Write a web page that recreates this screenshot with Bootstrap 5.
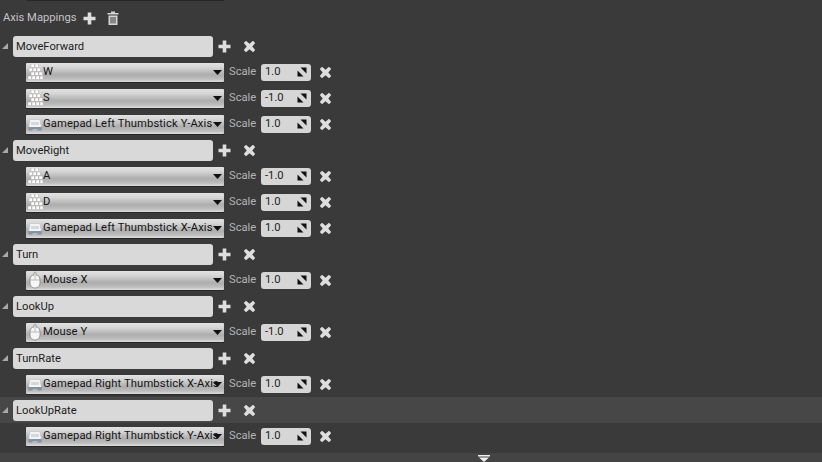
<!DOCTYPE html>
<html lang="en">
<head>
    <meta charset="UTF-8">
    <meta name="viewport" content="width=device-width, initial-scale=1.0">
    <title>Axis Mappings</title>
    <link href="https://cdn.jsdelivr.net/npm/bootstrap@5.3.0/dist/css/bootstrap.min.css" rel="stylesheet">
    <style>
        html, body { height: 100%; }
        body { background: #3a3a3a; font-family: Roboto, "Liberation Sans", sans-serif; font-size: 11.2px; color: #1c1c1c; overflow: hidden; }
        .top-sliver { height: 1px; width: 197px; margin-left: 27px; background: #262626; }
        .page-wrap { height: 462px; }
        .head-row { height: 26px; margin-top: 4px; margin-bottom: 2px; padding-left: 3px; color: #c4c4c4; }
        .map-row { height: 26px; }
        .map-row.hovered { background: #474747; }
        .fold-arrow { width: 13px; height: 26px; flex: none; }
        .name-box { width: 200px; height: 21px; background: #d9d9d9; border-radius: 3px; padding-left: 3px; line-height: 21px; }
        .sub-row { padding-left: 26px; }
        .combo { position: relative; width: 198px; height: 19px; flex: none; padding-left: 1px; border-radius: 1px; background: linear-gradient(#e2e2e2 0, #d4d4d4 25%, #adadad 62%, #bebebe 85%, #dedede 100%); box-shadow: 0 1px 0 #262626; }
        .combo-text { white-space: nowrap; color: #141414; letter-spacing: .13px; padding-top: 1px; }
        .combo svg.dev { flex: none; }
        .combo svg.drop { position: absolute; right: 2px; top: 7px; }
        .scale-lbl { width: 28px; margin-left: 5px; color: #b4b4b4; flex: none; padding-top: 1px; }
        .scale-box { width: 50px; height: 17px; margin-left: 4px; flex: none; background: #d6d6d6; border-radius: 3px; padding: 0 4px; color: #222; }
        .scale-box span { padding-top: 1px; }
        .act { flex: none; display: block; }
        .head-add { margin-left: 6px; }
        .head-trash { margin-left: 11px; }
        .act-add { margin-left: 5px; }
        .act-del { margin-left: 12px; }
        .act-rm { margin-left: 8px; }
        .bottom-bar { position: absolute; left: 0; right: 0; top: 453px; height: 9px; background: #444444; }
        .bottom-bar svg { position: absolute; left: 478px; top: 2px; }
    </style>
</head>
<body>
    <svg width="0" height="0" class="position-absolute">
        <defs>
            <symbol id="plus" viewBox="0 0 13 13"><path d="M4.700 .5h3.600v4.200h4.200v3.600H8.300v4.200H4.700V8.300H.5V4.700h4.200z" fill="#dedede"/></symbol>
            <symbol id="cross" viewBox="0 0 13 13"><path d="M3 .8 6.500 3.700 10 .8 12.200 3 9.300 6.500 12.200 10 10 12.200 6.500 9.300 3 12.200 .8 10 3.700 6.500 .8 3z" fill="#dedede"/></symbol>
            <symbol id="open" viewBox="0 0 8 8"><path d="M7 1v6H1z" fill="#a8a8a8"/></symbol>
            <symbol id="spin" viewBox="0 0 10 10"><path d="M3.500 .5H9.500V6.500zM.5 3.500l6 6h-6z" fill="#111"/></symbol>
            <symbol id="drop" viewBox="0 0 9 5"><path d="M0 0h9L4.500 5z" fill="#111"/></symbol>
            <symbol id="keys" viewBox="0 0 16 16">
                <g fill="#ffffff" stroke="#9a9a9a" stroke-width=".4">
                    <rect x="4" y="0" width="3.600" height="3.600"/><rect x="8" y="0" width="3.600" height="3.600"/>
                    <rect x="2" y="4" width="3.600" height="3.600"/><rect x="6" y="4" width="3.600" height="3.600"/><rect x="10" y="4" width="3.600" height="3.600"/>
                    <rect x="4" y="8" width="3.600" height="3.600"/><rect x="8" y="8" width="3.600" height="3.600"/><rect x="12" y="8" width="3.600" height="3.600"/>
                    <rect x="1" y="12" width="3.600" height="3.600"/><rect x="5" y="12" width="3.600" height="3.600"/><rect x="9" y="12" width="3.600" height="3.600"/><rect x="13" y="12" width="3" height="3.600"/>
                </g>
            </symbol>
            <symbol id="pad" viewBox="0 0 16 16">
                <path d="M3 3.500h10l1.500 8h-13z" fill="#f4f4f4" stroke="#b4bac0" stroke-width=".5"/>
                <path d="M4 6h8v3H4z" fill="#d2d8dc"/>
                <path d="M1 11h14l-.5 3.500h-3.500l-1-1.500H6l-1 1.500H1.500z" fill="#8494a3"/>
            </symbol>
            <symbol id="mouse" viewBox="0 0 16 18">
                <path d="M8 1c-1 0-1 1-1 3-2.500 0-4 2-4 5v3c0 3 2 5 5 5s5-2 5-5V9c0-3-1.500-5-4-5 0-2 0-3-1-3z" fill="#f6f6f6" stroke="#777" stroke-width=".7"/>
                <path d="M8 4v5M3 9h10" stroke="#a4a4a4" stroke-width=".7" fill="none"/>
            </symbol>
            <symbol id="trash" viewBox="0 0 12 14">
                <path d="M4 .5h4v1.500h3.500v1.500H.5V2H4zM1.500 4.500h9V14h-9zM3.500 6v6.500h1V6zm2 0v6.500h1V6zm2 0v6.500h1V6z" fill="#d4d4d4" fill-rule="evenodd"/>
            </symbol>
        </defs>
    </svg>

    <div class="page-wrap">
        <div class="top-sliver"></div>
        <div class="head-row d-flex align-items-center">
            <span>Axis Mappings</span>
            <svg class="act head-add" width="13" height="13"><use href="#plus"/></svg>
            <svg class="act head-trash" width="12" height="14"><use href="#trash"/></svg>
        </div>

        <div class="map-row d-flex align-items-center"><svg class="fold-arrow" viewBox="0 0 13 26"><use href="#open" x="1" y="9" width="8" height="8"/></svg><div class="name-box">MoveForward</div><svg class="act act-add" width="13" height="13"><use href="#plus"/></svg><svg class="act act-del" width="13" height="13"><use href="#cross"/></svg></div>
        <div class="map-row sub-row d-flex align-items-center"><div class="combo d-flex align-items-center"><svg class="dev" width="16" height="16"><use href="#keys"/></svg><span class="combo-text">W</span><svg class="drop" width="9" height="5"><use href="#drop"/></svg></div><span class="scale-lbl">Scale</span><div class="scale-box d-flex align-items-center justify-content-between"><span>1.0</span><svg width="10" height="10"><use href="#spin"/></svg></div><svg class="act act-rm" width="13" height="13"><use href="#cross"/></svg></div>
        <div class="map-row sub-row d-flex align-items-center"><div class="combo d-flex align-items-center"><svg class="dev" width="16" height="16"><use href="#keys"/></svg><span class="combo-text">S</span><svg class="drop" width="9" height="5"><use href="#drop"/></svg></div><span class="scale-lbl">Scale</span><div class="scale-box d-flex align-items-center justify-content-between"><span>-1.0</span><svg width="10" height="10"><use href="#spin"/></svg></div><svg class="act act-rm" width="13" height="13"><use href="#cross"/></svg></div>
        <div class="map-row sub-row d-flex align-items-center"><div class="combo d-flex align-items-center"><svg class="dev" width="16" height="16"><use href="#pad"/></svg><span class="combo-text">Gamepad Left Thumbstick Y-Axis</span><svg class="drop" width="9" height="5"><use href="#drop"/></svg></div><span class="scale-lbl">Scale</span><div class="scale-box d-flex align-items-center justify-content-between"><span>1.0</span><svg width="10" height="10"><use href="#spin"/></svg></div><svg class="act act-rm" width="13" height="13"><use href="#cross"/></svg></div>

        <div class="map-row d-flex align-items-center"><svg class="fold-arrow" viewBox="0 0 13 26"><use href="#open" x="1" y="9" width="8" height="8"/></svg><div class="name-box">MoveRight</div><svg class="act act-add" width="13" height="13"><use href="#plus"/></svg><svg class="act act-del" width="13" height="13"><use href="#cross"/></svg></div>
        <div class="map-row sub-row d-flex align-items-center"><div class="combo d-flex align-items-center"><svg class="dev" width="16" height="16"><use href="#keys"/></svg><span class="combo-text">A</span><svg class="drop" width="9" height="5"><use href="#drop"/></svg></div><span class="scale-lbl">Scale</span><div class="scale-box d-flex align-items-center justify-content-between"><span>-1.0</span><svg width="10" height="10"><use href="#spin"/></svg></div><svg class="act act-rm" width="13" height="13"><use href="#cross"/></svg></div>
        <div class="map-row sub-row d-flex align-items-center"><div class="combo d-flex align-items-center"><svg class="dev" width="16" height="16"><use href="#keys"/></svg><span class="combo-text">D</span><svg class="drop" width="9" height="5"><use href="#drop"/></svg></div><span class="scale-lbl">Scale</span><div class="scale-box d-flex align-items-center justify-content-between"><span>1.0</span><svg width="10" height="10"><use href="#spin"/></svg></div><svg class="act act-rm" width="13" height="13"><use href="#cross"/></svg></div>
        <div class="map-row sub-row d-flex align-items-center"><div class="combo d-flex align-items-center"><svg class="dev" width="16" height="16"><use href="#pad"/></svg><span class="combo-text">Gamepad Left Thumbstick X-Axis</span><svg class="drop" width="9" height="5"><use href="#drop"/></svg></div><span class="scale-lbl">Scale</span><div class="scale-box d-flex align-items-center justify-content-between"><span>1.0</span><svg width="10" height="10"><use href="#spin"/></svg></div><svg class="act act-rm" width="13" height="13"><use href="#cross"/></svg></div>

        <div class="map-row d-flex align-items-center"><svg class="fold-arrow" viewBox="0 0 13 26"><use href="#open" x="1" y="9" width="8" height="8"/></svg><div class="name-box">Turn</div><svg class="act act-add" width="13" height="13"><use href="#plus"/></svg><svg class="act act-del" width="13" height="13"><use href="#cross"/></svg></div>
        <div class="map-row sub-row d-flex align-items-center"><div class="combo d-flex align-items-center"><svg class="dev" width="16" height="18"><use href="#mouse"/></svg><span class="combo-text">Mouse X</span><svg class="drop" width="9" height="5"><use href="#drop"/></svg></div><span class="scale-lbl">Scale</span><div class="scale-box d-flex align-items-center justify-content-between"><span>1.0</span><svg width="10" height="10"><use href="#spin"/></svg></div><svg class="act act-rm" width="13" height="13"><use href="#cross"/></svg></div>

        <div class="map-row d-flex align-items-center"><svg class="fold-arrow" viewBox="0 0 13 26"><use href="#open" x="1" y="9" width="8" height="8"/></svg><div class="name-box">LookUp</div><svg class="act act-add" width="13" height="13"><use href="#plus"/></svg><svg class="act act-del" width="13" height="13"><use href="#cross"/></svg></div>
        <div class="map-row sub-row d-flex align-items-center"><div class="combo d-flex align-items-center"><svg class="dev" width="16" height="18"><use href="#mouse"/></svg><span class="combo-text">Mouse Y</span><svg class="drop" width="9" height="5"><use href="#drop"/></svg></div><span class="scale-lbl">Scale</span><div class="scale-box d-flex align-items-center justify-content-between"><span>-1.0</span><svg width="10" height="10"><use href="#spin"/></svg></div><svg class="act act-rm" width="13" height="13"><use href="#cross"/></svg></div>

        <div class="map-row d-flex align-items-center"><svg class="fold-arrow" viewBox="0 0 13 26"><use href="#open" x="1" y="9" width="8" height="8"/></svg><div class="name-box">TurnRate</div><svg class="act act-add" width="13" height="13"><use href="#plus"/></svg><svg class="act act-del" width="13" height="13"><use href="#cross"/></svg></div>
        <div class="map-row sub-row d-flex align-items-center"><div class="combo d-flex align-items-center"><svg class="dev" width="16" height="16"><use href="#pad"/></svg><span class="combo-text">Gamepad Right Thumbstick X-Axis</span><svg class="drop" width="9" height="5"><use href="#drop"/></svg></div><span class="scale-lbl">Scale</span><div class="scale-box d-flex align-items-center justify-content-between"><span>1.0</span><svg width="10" height="10"><use href="#spin"/></svg></div><svg class="act act-rm" width="13" height="13"><use href="#cross"/></svg></div>

        <div class="map-row hovered d-flex align-items-center"><svg class="fold-arrow" viewBox="0 0 13 26"><use href="#open" x="1" y="9" width="8" height="8"/></svg><div class="name-box">LookUpRate</div><svg class="act act-add" width="13" height="13"><use href="#plus"/></svg><svg class="act act-del" width="13" height="13"><use href="#cross"/></svg></div>
        <div class="map-row sub-row d-flex align-items-center"><div class="combo d-flex align-items-center"><svg class="dev" width="16" height="16"><use href="#pad"/></svg><span class="combo-text">Gamepad Right Thumbstick Y-Axis</span><svg class="drop" width="9" height="5"><use href="#drop"/></svg></div><span class="scale-lbl">Scale</span><div class="scale-box d-flex align-items-center justify-content-between"><span>1.0</span><svg width="10" height="10"><use href="#spin"/></svg></div><svg class="act act-rm" width="13" height="13"><use href="#cross"/></svg></div>
    </div>

    <div class="bottom-bar">
        <svg width="12" height="7" viewBox="0 0 12 7"><path d="M0 0h12v1.500H0zM1 2.500h10L6 7z" fill="#f0f0f0"/></svg>
    </div>

    <script src="https://cdn.jsdelivr.net/npm/bootstrap@5.3.0/dist/js/bootstrap.bundle.min.js"></script>
</body>
</html>
